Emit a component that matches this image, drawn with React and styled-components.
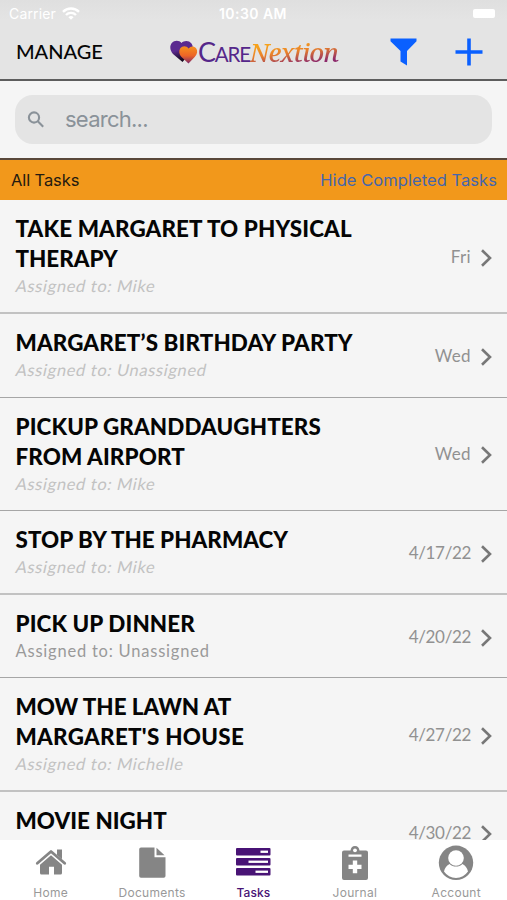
import React from "react";
import styled, { createGlobalStyle } from "styled-components";

const GlobalStyle = createGlobalStyle`
  * { box-sizing: border-box; }
  body { margin: 0; background: #f5f5f5; }
`;

const Screen = styled.main`
  width: 507px;
  height: 900px;
  display: flex;
  flex-direction: column;
  overflow: hidden;
  background: #f5f5f5;
  color: #060606;
  font-family: Lato, sans-serif;
`;

const Header = styled.header`
  flex: 0 0 81px;
  background: linear-gradient(#dfdfdf, #e4e4e4 20px);
  border-bottom: 2px solid #5d5d5d;
`;

const StatusBar = styled.div`
  height: 27px;
  display: grid;
  grid-template-columns: 1fr auto 1fr;
  align-items: center;
  padding: 0 12px 0 9px;
  color: #fff;
  font: 14px/27px Inter, sans-serif;
`;

const Carrier = styled.div`
  display: flex;
  align-items: center;
  gap: 6px;
  letter-spacing: 0.15px;
`;

const Clock = styled.div`
  font-weight: 600;
  font-size: 14px;
  letter-spacing: 0.45px;
  padding-left: 2px;
`;

const Battery = styled.div`
  justify-self: end;
  width: 22px;
  height: 9px;
  border-radius: 2px;
  background: #fff;
`;

const NavBar = styled.div`
  height: 52px;
  display: flex;
  align-items: center;
  padding: 0 24px 2px 16px;
`;

const Manage = styled.span`
  width: 154px;
  font-size: 20px;
  font-weight: 500;
  letter-spacing: -0.05px;
  padding-bottom: 2px;
`;

const Logo = styled.div`
  width: 220px;
  display: flex;
  align-items: center;
  height: 30px;
`;

const CareWord = styled.span`
  font: 400 27px/30px Lato, sans-serif;
  color: #55278a;
  padding-top: 2px;
  letter-spacing: -1.2px;
  small { font-size: 20.5px; }
`;

const NextionWord = styled.span`
  font: italic 500 25.5px/30px "Noto Serif", "Liberation Serif", serif;
  letter-spacing: -1.05px;
  padding-right: 3px;
  background: linear-gradient(172deg, #f6a21c 25%, #e9812a 48%, #8d2a6b 80%);
  -webkit-background-clip: text;
  background-clip: text;
  color: transparent;
`;

const Actions = styled.div`
  display: flex;
  align-items: center;
  gap: 38px;
  svg { display: block; }
`;

const SearchArea = styled.div`
  flex: 0 0 79px;
  padding: 14px 15px 0;
  border-bottom: 2px solid #59483a;
`;

const SearchField = styled.div`
  height: 49px;
  border-radius: 18px;
  background: #e4e4e4;
  display: flex;
  align-items: center;
  padding-left: 12px;
  gap: 20px;
  color: #8a9299;
  font: 22px/49px Inter, sans-serif;
  letter-spacing: -0.75px;
`;

const FilterBar = styled.div`
  flex: 0 0 40px;
  display: flex;
  align-items: center;
  justify-content: space-between;
  padding: 0 10px 0 11px;
  background: #f2981b;
  font: 16.5px/40px Inter, sans-serif;
  letter-spacing: -0.1px;
  color: #241a10;
`;

const HideLink = styled.span`
  color: #4566ad;
  letter-spacing: 0.06px;
`;

const List = styled.div`
  flex: 1;
  min-height: 0;
  padding-top: 0.6px;
  overflow: hidden;
`;

const Row = styled.div`
  height: ${(p) => (p.$tall ? 113.6 : 83.5)}px;
  display: flex;
  justify-content: space-between;
  align-items: center;
  padding: 0 15px 0 15.5px;
  border-bottom: ${(p) => (p.$thin ? "1px solid #a6a6a6" : "2px solid #c2c2c2")};
`;

const Title = styled.div`
  font-size: 22.4px;
  font-weight: 900;
  line-height: 30px;
  color: #050505;
  white-space: nowrap;
`;

const TitleLine = styled.div`
  letter-spacing: ${(p) => p.$spacing}px;
`;

const Assignee = styled.div`
  font-size: 16.5px;
  line-height: 24px;
  transform: ${(p) => (p.$open ? "none" : "skewX(-12deg)")};
  color: ${(p) => (p.$open ? "#9a9a9a" : "#c2c2c2")};
  letter-spacing: ${(p) => (p.$open ? 0.78 : 0.64)}px;
`;

const Due = styled.div`
  display: flex;
  align-items: center;
  gap: 10px;
  color: #919191;
  font-size: 17px;
  letter-spacing: ${(p) => (p.$numeric ? -0.35 : 0.35)}px;
  svg { margin-top: 3px; }
`;

const TabBar = styled.nav`
  flex: 0 0 60px;
  display: grid;
  grid-template-columns: repeat(5, 1fr);
  background: #fff;
`;

const Tab = styled.div`
  display: flex;
  flex-direction: column;
  align-items: center;
  padding-top: 5px;
  color: ${(p) => (p.$active ? "#481375" : "#858585")};
  svg { display: block; }
`;

const TabLabel = styled.span`
  font: ${(p) => (p.$active ? 500 : 400)} 12px/14px Inter, sans-serif;
  margin-top: 5px;
  letter-spacing: ${(p) => (p.$active ? 0.1 : 0.3)}px;
  color: ${(p) => (p.$active ? "#481375" : "#999")};
`;

const WifiIcon = () => (
  <svg width="18" height="13" viewBox="0 0 18 13" fill="none" stroke="#fff" strokeWidth="2.4">
    <path d="M1 4.8a11.4 11.4 0 0 1 16 0M4 8a7 7 0 0 1 10 0" />
    <path d="M6.4 10.2a3.8 3.8 0 0 1 5.2 0L9 12.8z" fill="#fff" stroke="none" />
  </svg>
);

const Hearts = () => (
  <svg width="28" height="24" viewBox="0 0 28 24">
    <defs>
      <linearGradient id="violet" x1="0" y1="0" x2="0.3" y2="1">
        <stop offset="0.5" stopColor="#5b2a90" />
        <stop offset="0.95" stopColor="#160a20" />
      </linearGradient>
      <linearGradient id="flame" x1="0" y1="0" x2="0" y2="1">
        <stop offset="0.1" stopColor="#f58a1f" />
        <stop offset="0.55" stopColor="#ec6427" />
        <stop offset="1" stopColor="#78276f" />
      </linearGradient>
    </defs>
    <path d="M11.500 3C9.500.2 4.500-.2 1.800 3-.8 6.500.2 10.500 3 14l9.500 8 6-7c4-4 5.500-8 3-11.500-2.500-3.200-7.500-3.200-10-.5z" fill="url(#violet)" />
    <path d="M18.600 8.400C16.500 5.600 12.300 5.500 10.300 8.300c-1.900 2.900-1.200 6.200 1.200 8.800l7 6.500 6.200-6.500c2.700-2.900 3.300-6.100 1.400-8.800-2-2.600-5.600-2.500-7.500.1z" fill="url(#flame)" />
  </svg>
);

const HomeIcon = () => (
  <svg width="32" height="36" viewBox="0 0 32 36" fill="currentColor">
    <path d="M22 4.500h5v9.700L22 10z" />
    <path d="M2.300 18.300 16 6.500l13.700 11.800" fill="none" stroke="currentColor" strokeWidth="2.800" strokeLinecap="round" strokeLinejoin="round" />
    <path d="m16 10.300 11 9.400V28a1.500 1.500 0 0 1-1.500 1.500H19v-7.700h-5v7.700H6.500A1.500 1.500 0 0 1 5 28v-8.300z" />
  </svg>
);

const DocumentIcon = () => (
  <svg width="28" height="36" viewBox="0 0 28 36" fill="currentColor">
    <path d="M3 2.500h13.500v9.700H27.500V31a1.800 1.800 0 0 1-1.800 1.800H3A1.800 1.800 0 0 1 1.200 31V4.300A1.800 1.800 0 0 1 3 2.500z" />
    <path d="M18.500 2.800v7.500h8z" />
  </svg>
);

const TasksIcon = () => (
  <svg width="36" height="36" viewBox="0 0 36 36">
    <g fill="#481375">
      <rect x="1" y="3" width="34.500" height="7.500" rx="1" />
      <rect x="1" y="13" width="34.500" height="7.500" rx="1" />
      <rect x="1" y="23" width="34.500" height="7.500" rx="1" />
    </g>
    <g fill="#fff">
      <rect x="25.500" y="5.600" width="7.500" height="2.300" />
      <rect x="13.500" y="15.600" width="19.500" height="2.300" />
      <rect x="20.500" y="25.600" width="12.500" height="2.300" />
    </g>
  </svg>
);

const JournalIcon = () => (
  <svg width="28" height="36" viewBox="0 0 28 36">
    <path d="M3 5.500h6.500C9.800 3 11.300 1 14 1s4.200 2 4.500 4.500H25a2 2 0 0 1 2 2V33a2 2 0 0 1-2 2H3a2 2 0 0 1-2-2V7.500a2 2 0 0 1 2-2z" fill="#858585" />
    <circle cx="14" cy="5.300" r="1.900" fill="#fff" />
    <path d="M7.500 9.500h13v2.200h-13zM11.800 15.500h4.400v4.200h4.300V24h-4.300v4.200h-4.400V24H7.500v-4.300h4.300z" fill="#fff" />
  </svg>
);

const AccountIcon = () => (
  <svg width="36" height="36" viewBox="0 0 36 36">
    <circle cx="18" cy="17.800" r="17.200" fill="#858585" />
    <circle cx="18" cy="13" r="7.800" fill="#fff" />
    <path d="M6 26.500c.7-3.500 2.700-6.500 5.600-7.600 3.600 3.500 9.200 3.500 12.800 0 2.900 1.100 4.900 4.100 5.600 7.600A15.300 15.300 0 0 1 18 33 15.300 15.300 0 0 1 6 26.500z" fill="#fff" />
  </svg>
);

const Chevron = () => (
  <svg width="11" height="18" viewBox="0 0 11 18" fill="none" stroke="#777" strokeWidth="2.600">
    <path d="m1 1.200 8 7.800-8 7.800" />
  </svg>
);

const tasks = [
  { lines: [["TAKE MARGARET TO PHYSICAL", 0.15], ["THERAPY", 0]], who: "Mike", due: "Fri" },
  { lines: [["MARGARET’S BIRTHDAY PARTY", 0.13]], who: "Unassigned", due: "Wed", thin: true },
  { lines: [["PICKUP GRANDDAUGHTERS", 0.13], ["FROM AIRPORT", 0.12]], who: "Mike", due: "Wed", thin: true },
  { lines: [["STOP BY THE PHARMACY", 0.05]], who: "Mike", due: "4/17/22" },
  { lines: [["PICK UP DINNER", 0.12]], who: "Unassigned", due: "4/20/22", open: true, thin: true },
  { lines: [["MOW THE LAWN AT", 0], ["MARGARET'S HOUSE", 0.3]], who: "Michelle", due: "4/27/22" },
  { lines: [["MOVIE NIGHT", 0.05]], due: "4/30/22" },
];

const tabs = [
  ["Home", HomeIcon],
  ["Documents", DocumentIcon],
  ["Tasks", TasksIcon],
  ["Journal", JournalIcon],
  ["Account", AccountIcon],
];

export default function App() {
  return (
    <Screen>
      <GlobalStyle />
      <Header>
        <StatusBar>
          <Carrier>Carrier <WifiIcon /></Carrier>
          <Clock>10:30 AM</Clock>
          <Battery />
        </StatusBar>
        <NavBar>
          <Manage>MANAGE</Manage>
          <Logo>
            <Hearts />
            <CareWord>C<small>ARE</small></CareWord>
            <NextionWord>Nextion</NextionWord>
          </Logo>
          <Actions>
            <svg width="27" height="28" viewBox="0 0 27 28" fill="#0a60ff">
              <path d="M.5.500h26v2.800L17 13v14.500l-6.500-4V13L.5 3.300z" />
            </svg>
            <svg width="28" height="28" viewBox="0 0 28 28" stroke="#0a60ff" strokeWidth="3.600">
              <path d="M14 .5v27M.5 14h27" />
            </svg>
          </Actions>
        </NavBar>
      </Header>
      <SearchArea>
        <SearchField>
          <svg width="18" height="18" viewBox="0 0 18 18" fill="none" stroke="#8a9299" strokeWidth="2.100">
            <circle cx="7" cy="6.500" r="5.100" />
            <path d="m10.800 10.300 5.400 5.400" />
          </svg>
          search...
        </SearchField>
      </SearchArea>
      <FilterBar>
        <span>All Tasks</span>
        <HideLink>Hide Completed Tasks</HideLink>
      </FilterBar>
      <List>
        {tasks.map((task) => (
          <Row key={task.lines[0][0]} $tall={task.lines.length > 1} $thin={task.thin}>
            <div>
              <Title>
                {task.lines.map(([text, spacing]) => (
                  <TitleLine key={text} $spacing={spacing}>{text}</TitleLine>
                ))}
              </Title>
              <Assignee $open={task.open}>{task.who ? `Assigned to: ${task.who}` : "\u00a0"}</Assignee>
            </div>
            <Due $numeric={task.due.includes("/")}>{task.due}<Chevron /></Due>
          </Row>
        ))}
      </List>
      <TabBar>
        {tabs.map(([label, Icon]) => (
          <Tab key={label} $active={label === "Tasks"}>
            <Icon />
            <TabLabel $active={label === "Tasks"}>{label}</TabLabel>
          </Tab>
        ))}
      </TabBar>
    </Screen>
  );
}
